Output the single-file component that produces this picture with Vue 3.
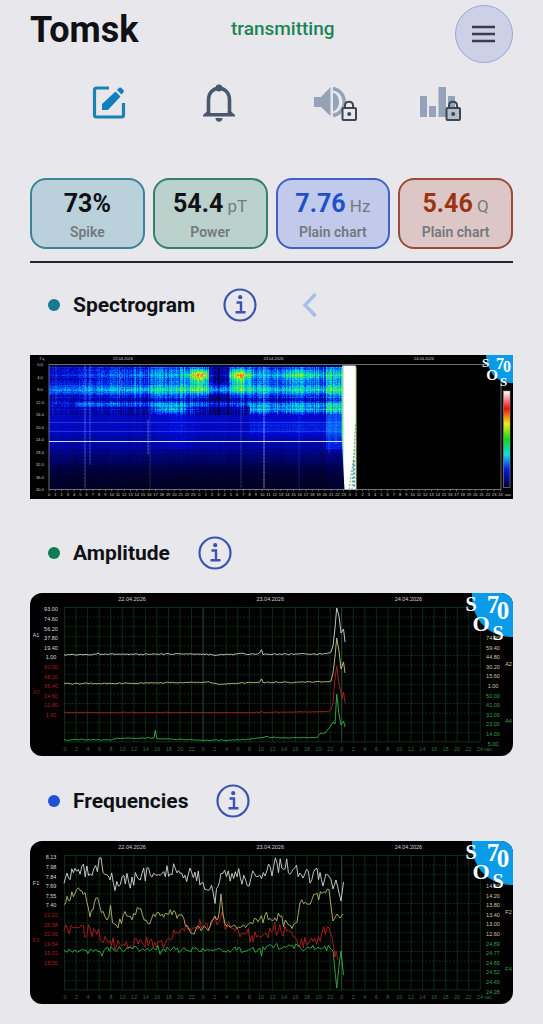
<script setup>
import { ref } from 'vue'

const menuOpen = ref(false)

const metrics = [
  { value: '73%', unit: '', label: 'Spike', tone: 'teal' },
  { value: '54.4', unit: 'pT', label: 'Power', tone: 'green' },
  { value: '7.76', unit: 'Hz', label: 'Plain chart', tone: 'blue' },
  { value: '5.46', unit: 'Q', label: 'Plain chart', tone: 'red' },
]

const dates = ['22.04.2026', '23.04.2026', '24.04.2026']

// small seeded generator, so the noise is the same on every render
const makeRandom = seed => () => {
  seed = (seed * 16807) % 2147483647
  return seed / 2147483647
}

// trend points plus jitter, up to the x where the final burst starts
const trace = (points, jitter, seed, calmFrom = 300) => {
  const rnd = makeRandom(seed)
  const out = []
  for (let i = 0; i < points.length - 1; i++) {
    const [x1, y1] = points[i]
    const [x2, y2] = points[i + 1]
    const steps = Math.max(1, Math.round((x2 - x1) / 1.7))
    for (let s = 0; s < steps; s++) {
      const x = x1 + ((x2 - x1) * s) / steps
      const noise = x < calmFrom ? (rnd() + rnd() - 1) * jitter : 0
      out.push(`${x.toFixed(1)},${(y1 + ((y2 - y1) * s) / steps + noise).toFixed(1)}`)
    }
  }
  out.push(points[points.length - 1].join(','))
  return out.join(' ')
}

const charts = [
  {
    title: 'Amplitude',
    tone: 'green',
    axes: ['A1', 'A2', 'A3', 'A4'],
    left: ['93.00', '74.60', '56.20', '37.80', '19.40', '1.00', '60.00', '48.20', '36.40', '24.60', '12.80', '1.00'],
    right: ['74.00', '59.40', '44.80', '30.20', '15.60', '1.00', '50.00', '41.00', '32.00', '23.00', '14.00', '5.00'],
    lines: [
      {
        color: '#b81f1f',
        points: trace([[34, 119.5], [200, 119.5], [230, 119.5], [231.5, 117.5], [233, 119.5], [270, 119], [298, 118.5], [301, 117], [303, 110], [304.5, 90], [306.7, 73], [309, 90], [312, 106], [313.5, 99], [315, 110]], 0.5, 11),
      },
      {
        color: '#c9c98a',
        points: trace([[34, 90.7], [100, 90.3], [160, 89.3], [178, 89], [186, 91], [198, 90.5], [229, 89.5], [231.5, 86], [233, 89.5], [270, 89], [298, 89], [301, 88], [303, 80], [305, 64], [306.7, 45], [309, 58], [311, 76], [313.5, 69], [315, 80]], 0.8, 23),
      },
      {
        color: '#d8d8d8',
        points: trace([[34, 61.7], [62, 61.7], [68, 60.4], [72, 61.4], [150, 60.9], [185, 61.7], [203, 61.5], [210, 60.2], [216, 61.4], [229, 61], [231.5, 56.5], [233, 61.2], [290, 61], [298, 60.5], [301, 59], [303, 53], [305, 35], [306.7, 15], [309, 23], [311, 40], [313.5, 36], [315, 49]], 0.8, 37),
      },
      {
        color: '#35b545',
        points: trace([[34, 146.7], [80, 146.7], [90, 145.2], [122, 145.2], [124, 145], [125.3, 137], [126.7, 145.5], [160, 147], [200, 147.2], [220, 146], [236, 144], [250, 144.8], [287, 144.5], [290, 140.5], [295, 140], [300, 134], [303, 129], [305, 131], [306.7, 101], [309, 121], [311, 132], [313.5, 128], [315, 134]], 0.7, 41, 287),
      },
    ],
  },
  {
    title: 'Frequencies',
    tone: 'blue',
    axes: ['F1', 'F2', 'F3', 'F4'],
    left: ['8.13', '7.98', '7.84', '7.69', '7.55', '7.40', '21.10', '20.58', '20.06', '19.54', '19.02', '18.50'],
    right: ['14.60', '14.20', '13.80', '13.40', '13.00', '12.60', '24.89', '24.77', '24.65', '24.52', '24.40', '24.28'],
    lines: [
      {
        color: '#b81f1f',
        points: trace([[34, 90], [48, 87], [62, 92], [75, 99], [88, 104], [115, 102], [128, 104], [142, 94], [158, 85], [168, 84], [182, 81], [192, 78], [205, 91], [225, 95], [238, 92], [243, 89], [260, 92], [270, 105], [283, 98], [299, 89], [302, 96], [305, 116], [306, 110], [308, 119]], 9, 53),
      },
      {
        color: '#35b545',
        points: trace([[34, 109.5], [68, 109], [72, 113], [76, 109], [128, 108], [130, 114], [132, 108], [200, 109], [230, 109], [231.5, 116], [233, 108], [240, 106], [300, 107], [303, 110], [304, 120], [306.7, 147], [309, 125], [311, 110], [313.5, 134]], 4, 67),
      },
      {
        color: '#b9b96c',
        points: trace([[34, 67], [37, 59], [45, 52], [50, 48], [55, 52], [60, 73], [66, 56], [75, 74], [79, 78], [80.5, 62], [82.5, 78], [88, 87], [95, 70], [102, 77], [109, 67], [118, 82], [127, 74], [152, 73], [159, 89], [178, 88], [185, 71], [188, 76], [191, 56], [195, 84], [212, 86], [228, 77], [240, 75], [250, 78], [257, 85], [267, 81], [270, 60], [277, 63], [287, 55], [299, 50], [303, 80], [307, 73], [310, 77], [313, 73]], 6, 79),
      },
      {
        color: '#d8d8d8',
        points: trace([[34, 45], [37, 33], [45, 32], [62, 32], [71, 25], [75, 36], [85, 42], [92, 35], [102, 42], [112, 34], [122, 32], [142, 30], [155, 34], [165, 37], [178, 42], [185, 54], [191, 35], [202, 33], [212, 38], [228, 32], [242, 26], [260, 27], [273, 35], [287, 32], [293, 42], [299, 29], [303, 48], [306, 39], [311, 60], [313.5, 41]], 11, 97),
      },
    ],
  },
]

// spectrogram: 307 x 125 cells, grouped in one path per colour
const stops = [
  [0, 0, 0, 8],
  [0.15, 0, 0, 80],
  [0.35, 0, 10, 215],
  [0.5, 0, 110, 255],
  [0.62, 0, 215, 225],
  [0.72, 40, 235, 90],
  [0.85, 220, 235, 40],
  [1, 255, 110, 20],
]

const colorAt = v => {
  const i = Math.max(1, stops.findIndex(s => s[0] >= v))
  const a = stops[i - 1]
  const b = stops[i]
  const t = (v - a[0]) / (b[0] - a[0])
  return `rgb(${[1, 2, 3].map(k => Math.round(a[k] + (b[k] - a[k]) * t)).join(',')})`
}

const bump = (v, center, width) => Math.exp(-(((v - center) / width) ** 2))

const buildSpectrogram = () => {
  const rnd = makeRandom(2026)
  const levels = 40
  const paths = Array(levels + 1).fill('')
  const rowNoise = Array.from({ length: 125 }, () => rnd() - 0.5)
  for (let x = 0; x < 307; x++) {
    const column = rnd() - 0.5
    const day = Math.min(1, x / 90)
    const gap = x > 159 && x < 180
    const hot = bump(x, 150, 10) + bump(x, 190, 10)
    const tail = x > 276 ? 1 : 0
    for (let y = 0; y < 125; y++) {
      let v = y < 84 ? 0.32 - y * 0.0006 : Math.max(0.07, 0.24 - (y - 84) * 0.006)
      v += bump(y, 24, 4) * (0.2 + day * 0.13)
      v += bump(y, 39, 2.5) * (x > 25 ? 0.2 : 0.06)
      if (!gap) {
        v += bump(y, 10, 9) * day * 0.2
        v += bump(y, 31, 3) * day * 0.1
        v += bump(y, 44, 4) * (bump(x, 122, 18) * 0.25 + (x > 200 ? 0.25 : 0))
      } else {
        v -= y < 50 ? 0.09 : 0
      }
      v += bump(y, 10, 7) * hot * 0.42 + bump(y, 22, 7) * hot * 0.16
      v += bump(x, 250, 25) * bump(y, 10, 6) * 0.16
      v += bump(y, 62, 9) * (x > 200 ? 0.1 : 0.04)
      v += tail * (y < 85 ? 0.11 : 0.02)
      if (y < 84) v += bump(x, 130, 16) * 0.04
      v += rowNoise[y] * (y < 50 ? 0.11 : 0.03)
      v += column * (y < 50 ? 0.16 * day + 0.03 : 0.03)
      v += (rnd() - 0.5) * (y < 50 ? 0.11 : 0.03)
      if (y < 2) v = 0.12
      const level = Math.round(Math.min(1, Math.max(0, v)) * levels)
      paths[level] += `M${x} ${y}h1v1h-1z`
    }
  }
  return paths.map((d, i) => ({ d, fill: colorAt(i / levels) })).filter(p => p.d)
}

const spectrogram = buildSpectrogram()
const streaks = [
  [4, 0, 50, 0.2], [7, 0, 40, 0.3], [36, 0, 124, 0.5], [41, 0, 100, 0.4], [72, 8, 24, 0.5],
  [99, 55, 90, 0.55], [101, 40, 124, 0.25], [192, 30, 124, 0.3], [215, 2, 124, 0.75],
  [250, 5, 124, 0.2], [280, 10, 90, 0.25], [287, 5, 80, 0.3],
]
</script>

<template>
  <main class="page">
    <header class="header">
      <h1>Tomsk</h1>
      <p class="status">transmitting</p>
      <button class="menu" type="button" aria-label="Menu" :aria-expanded="menuOpen" @click="menuOpen = !menuOpen">
        <svg width="24" height="18" viewBox="0 0 24 18">
          <path d="M0 2h23M0 9h23M0 16h23" stroke="#3a3d4c" stroke-width="2.4" />
        </svg>
      </button>
    </header>

    <nav class="tools">
      <button type="button" aria-label="Edit">
        <svg width="56" height="40" viewBox="0 0 56 40" fill="none">
          <path d="M28 5H15.500Q13.500 5 13.500 7V32Q13.500 34 15.500 34H40.500Q42.500 34 42.500 32V20" stroke="#1c82b2" stroke-width="3.200" />
          <path d="M21 27v-6L34.500 8.500l5 5L27 27zM36 7l2.200-2.200q1-.8 2 0l2.300 2.400q.8 1 0 2L40.500 11.500z" fill="#127fbd" />
        </svg>
      </button>
      <button type="button" aria-label="Notifications">
        <svg width="56" height="40" viewBox="0 0 56 40" fill="none">
          <path d="M17.500 31V17C17.500 1.500 38.500 1.500 38.500 17V31" stroke="#4a586b" stroke-width="3.600" />
          <circle cx="28" cy="5" r="3.400" fill="#4a586b" />
          <path d="M12 33.500v-1.500l4.500-4h23l4.500 4v1.500z" fill="#4a586b" />
          <path d="M19.500 27h17v3h-17z" fill="#e8e8ec" />
          <path d="M24.500 35h7c0 5-7 5-7 0z" fill="#4a586b" />
        </svg>
      </button>
      <button type="button" aria-label="Sound, locked">
        <svg width="56" height="40" viewBox="0 0 56 40" fill="none">
          <path d="M12 14h7L28.500 4v29L19 24h-7z" fill="#94a3b8" />
          <path d="M31 9.500c8 3 8 16 0 19z" fill="#94a3b8" />
          <path d="M31 5.500c15 3 15 24 0 27" stroke="#94a3b8" stroke-width="3.400" />
          <path d="M43 25v-2.500c0-5 8-5 8 0V25" stroke="#3e4656" stroke-width="2" />
          <rect x="40.500" y="25" width="13.500" height="12" rx="1" fill="#e8e8ec" stroke="#3e4656" stroke-width="2" />
          <circle cx="47.200" cy="31" r="2" fill="#3e4656" />
        </svg>
      </button>
      <button type="button" aria-label="Statistics, locked">
        <svg width="56" height="40" viewBox="0 0 56 40" fill="none">
          <path d="M8 13h7v21H8zM17 23h7v11h-7zM26.500 4h7.500v30h-7.500zM36 13h7v21h-7z" fill="#94a3b8" />
          <path d="M37 25v-2.500c0-5 8-5 8 0V25" stroke="#3e4656" stroke-width="2" />
          <rect x="34.500" y="25" width="13.500" height="12" rx="1" fill="#b4bdcb" stroke="#3e4656" stroke-width="2" />
          <circle cx="41.200" cy="31" r="2" fill="#3e4656" />
        </svg>
      </button>
    </nav>

    <section class="metrics">
      <div v-for="m in metrics" :key="m.tone" class="metric" :class="m.tone">
        <p class="value">{{ m.value }}<span v-if="m.unit" class="unit">&nbsp;{{ m.unit }}</span></p>
        <p class="label">{{ m.label }}</p>
      </div>
    </section>

    <section>
      <div class="heading">
        <span class="dot teal"></span>
        <h2>Spectrogram</h2>
        <button type="button" class="info" aria-label="About Spectrogram">
          <svg width="34" height="34" viewBox="0 0 34 34" fill="none" stroke="#3a53b0">
            <circle cx="17" cy="17" r="15.500" stroke-width="2.200" />
            <circle cx="17.200" cy="9.200" r="2.100" fill="#3a53b0" stroke="none" />
            <path d="M13.500 14.500H18V24M12.500 24.200h10" stroke-width="2.400" />
          </svg>
        </button>
        <button type="button" class="back" aria-label="Back">
          <svg width="16" height="26" viewBox="0 0 16 26" fill="none">
            <path d="M13.500 2L3 13l10.500 11" stroke="#a9bee6" stroke-width="3.400" />
          </svg>
        </button>
      </div>
      <div class="chart">
        <svg viewBox="0 0 483 144" class="spectrum">
          <defs>
            <linearGradient id="scale" x1="0" y1="0" x2="0" y2="1">
              <stop offset="0" stop-color="#fff" />
              <stop offset="0.180" stop-color="#f01010" />
              <stop offset="0.340" stop-color="#f4ee10" />
              <stop offset="0.500" stop-color="#10d818" />
              <stop offset="0.660" stop-color="#10dbe8" />
              <stop offset="0.820" stop-color="#0a14e0" />
              <stop offset="1" stop-color="#000030" />
            </linearGradient>
            <linearGradient id="edge" x1="0" y1="0" x2="1" y2="0">
              <stop offset="0" stop-color="#3fc777" />
              <stop offset="0.200" stop-color="#fff" />
              <stop offset="0.850" stop-color="#fff" />
              <stop offset="1" stop-color="#b9d780" />
            </linearGradient>
          </defs>
          <rect width="483" height="144" fill="#000" />
          <g transform="translate(19 9.500)" shape-rendering="crispEdges">
            <path v-for="p in spectrogram" :key="p.fill" :d="p.d" :fill="p.fill" />
          </g>
          <g transform="translate(19 9.500)">
            <path d="M0 58H293M0 67H293" stroke="#8e96ff" stroke-width="0.500" opacity="0.600" />
            <path d="M0 77H293" stroke="#d5dcff" stroke-width="1" />
            <path
              v-for="(s, i) in streaks"
              :key="i"
              :d="`M${s[0]} ${s[1]}V${s[2]}`"
              stroke="#c8e4ff"
              stroke-width="0.800"
              stroke-dasharray="3 0.600"
              :opacity="s[3]"
            />
            <path d="M293 1H306Q307.500 1 307.500 4V125H295.500L292.500 70Z" fill="url(#edge)" />
            <path d="M303 125L306.500 60M300 125L306 85" stroke="#4bb46b" stroke-width="1" stroke-dasharray="2 1.500" />
            <path d="M305 122V95" stroke="#2b63d8" stroke-width="1.500" stroke-dasharray="2 2" />
          </g>
          <path d="M19 9.500H471V134.500H19Z" fill="none" stroke="#b5b5b5" stroke-width="0.600" />
          <path
            v-for="n in 73"
            :key="n"
            :d="`M${19 + (n - 1) * 6.27} 134.500v2`"
            stroke="#b5b5b5"
            stroke-width="0.500"
          />
          <g class="tiny" font-size="4">
            <text x="12" y="5">Гц</text>
            <text v-for="n in 11" :key="n" x="10" :y="11 + (n - 1) * 12.5">{{ (n - 1) * 4 }}.0</text>
            <text v-for="(d, i) in dates" :key="d" :x="93 + i * 150.5" y="4.800">{{ d }}</text>
            <text v-for="n in 73" :key="n" :x="19 + (n - 1) * 6.27" y="140.500">{{ n === 73 ? 24 : (n - 1) % 24 }}</text>
            <text x="478" y="140.500">час</text>
          </g>
          <rect x="473.500" y="36" width="6.500" height="96.500" fill="url(#scale)" stroke="#999" stroke-width="0.600" />
          <g class="logo">
            <path d="M456 0C457 14 464 28 483 28V0z" />
            <text x="455.500" y="12" font-size="13">S</text>
            <text x="462" y="25" font-size="15">O</text>
            <text x="473.500" y="31" font-size="13">S</text>
            <text x="470" y="14" font-size="16">7</text>
            <text x="477" y="17" font-size="16">0</text>
          </g>
        </svg>
      </div>
    </section>

    <section v-for="chart in charts" :key="chart.title">
      <div class="heading">
        <span class="dot" :class="chart.tone"></span>
        <h2>{{ chart.title }}</h2>
        <button type="button" class="info" :aria-label="`About ${chart.title}`">
          <svg width="34" height="34" viewBox="0 0 34 34" fill="none" stroke="#3a53b0">
            <circle cx="17" cy="17" r="15.500" stroke-width="2.200" />
            <circle cx="17.200" cy="9.200" r="2.100" fill="#3a53b0" stroke="none" />
            <path d="M13.500 14.500H18V24M12.500 24.200h10" stroke-width="2.400" />
          </svg>
        </button>
      </div>
      <div class="chart rounded">
        <svg viewBox="0 0 483 163">
          <rect width="483" height="163" fill="#000" />
          <g stroke="#12452a" stroke-width="0.700">
            <path
              v-for="n in 37"
              :key="n"
              :d="`M${34.5 + (n - 1) * 11.55} 14.500V149`"
              :stroke="n === 13 || n === 25 ? '#2b7a4c' : '#103c25'"
            />
            <path
              v-for="n in 15"
              :key="n"
              :d="`M34.500 ${14.5 + (n - 1) * 9.6}H450`"
              :stroke-dasharray="n === 1 || n === 15 ? 'none' : '2 1.500'"
            />
          </g>
          <polyline
            v-for="line in chart.lines"
            :key="line.color"
            :points="line.points"
            fill="none"
            :stroke="line.color"
            stroke-width="0.900"
          />
          <g class="tiny" font-size="5.500">
            <text v-for="(d, i) in dates" :key="d" :x="102 + i * 138.2" y="7.500">{{ d }}</text>
            <text
              v-for="(t, i) in chart.left"
              :key="i"
              x="21"
              :y="18.4 + i * 9.6"
              :fill="i < 6 ? '#d8d8d8' : '#b01c1c'"
            >{{ t }}</text>
            <text
              v-for="(t, i) in chart.right"
              :key="i"
              x="463"
              :y="47 + i * 9.6"
              :fill="i < 6 ? '#cfcfa0' : '#2fa544'"
            >{{ t }}</text>
            <text x="6" y="43.500">{{ chart.axes[0] }}</text>
            <text x="478.500" y="73" fill="#cfcfa0">{{ chart.axes[1] }}</text>
            <text x="6" y="101" fill="#8c1818">{{ chart.axes[2] }}</text>
            <text x="478.500" y="130" fill="#2fa544">{{ chart.axes[3] }}</text>
            <text v-for="n in 37" :key="n" :x="35 + (n - 1) * 11.53" y="158" fill="#2c6f46">
              {{ n === 37 ? 24 : ((n - 1) * 2) % 24 }}
            </text>
            <text x="458" y="158" fill="#2c6f46">час</text>
          </g>
          <g class="logo">
            <path d="M442 0C441 24 456 44 483 44V0z" />
            <text x="441" y="18" font-size="20">S</text>
            <text x="451" y="38" font-size="22">O</text>
            <text x="468" y="47" font-size="20">S</text>
            <text x="463" y="20" font-size="25">7</text>
            <text x="473" y="26" font-size="25">0</text>
          </g>
        </svg>
      </div>
    </section>
  </main>
</template>

<style>
body {
  margin: 0;
  background: #e8e8ec;
}
</style>

<style scoped>
.page {
  padding: 5px 30px 20px;
  font-family: Roboto, 'Liberation Sans', sans-serif;
  color: #101114;
}

h1,
h2,
p {
  margin: 0;
}

button {
  padding: 0;
  border: none;
  background: none;
  cursor: pointer;
}

svg {
  display: block;
}

.header {
  display: grid;
  grid-template-columns: 201px 1fr 58px;
}

h1 {
  font-size: 36px;
  line-height: 50px;
  font-weight: 700;
}

.status {
  color: #1c8457;
  font-size: 19px;
  line-height: 48px;
  font-weight: 500;
}

.menu {
  display: flex;
  align-items: center;
  justify-content: center;
  width: 58px;
  height: 58px;
  border: 1px solid #9da6d3;
  border-radius: 50%;
  background: #cdd1e7;
}

.tools {
  display: flex;
  justify-content: space-between;
  padding: 20px 45px 55px 51px;
}

.metrics {
  display: grid;
  grid-template-columns: repeat(4, 1fr);
  gap: 8px;
  padding-bottom: 12px;
  border-bottom: 2px solid #25262b;
}

.metric {
  box-sizing: border-box;
  height: 71px;
  padding-top: 8px;
  border: 2px solid;
  border-radius: 16px;
  text-align: center;
}

.metric.teal {
  border-color: #3a839c;
  background: #bad0da;
}

.metric.green {
  border-color: #35806a;
  background: #bad1cc;
}

.metric.blue {
  border-color: #4060c4;
  background: #c1caea;
}

.metric.blue .value {
  color: #1f4fc9;
}

.metric.red {
  border-color: #9c4c36;
  background: #dcc7c6;
}

.metric.red .value {
  color: #9c3412;
}

.value {
  font-size: 25px;
  line-height: 32px;
  font-weight: 700;
}

.value .unit {
  color: #74797d;
  font-size: 17px;
  line-height: 20px;
  font-weight: 400;
}

.label {
  color: #74797f;
  font-size: 14px;
  line-height: 24px;
  font-weight: 600;
}

.heading {
  display: flex;
  align-items: center;
  height: 32px;
  padding: 26px 0 24px 18px;
}

.dot {
  width: 12px;
  height: 12px;
  margin-right: 13px;
  border-radius: 50%;
}

.dot.teal {
  background: #157a92;
}

.dot.green {
  background: #0d7c55;
}

.dot.blue {
  background: #1f52d6;
}

h2 {
  font-size: 21px;
  line-height: 32px;
  font-weight: 700;
}

.info {
  margin-left: 28px;
}

.back {
  margin-left: 45px;
}

.chart {
  display: flex;
  align-items: center;
  aspect-ratio: 483 / 163;
  margin-bottom: 3px;
}

.chart svg {
  width: 100%;
}

.rounded {
  overflow: hidden;
  border-radius: 12px;
}

.tiny {
  fill: #d0d0d0;
  font-family: 'Liberation Sans', sans-serif;
  text-anchor: middle;
}

.logo path {
  fill: #0a9be8;
}

.logo text {
  fill: #fff;
  font-family: 'Liberation Serif', serif;
  font-weight: 700;
  text-anchor: middle;
}
</style>
